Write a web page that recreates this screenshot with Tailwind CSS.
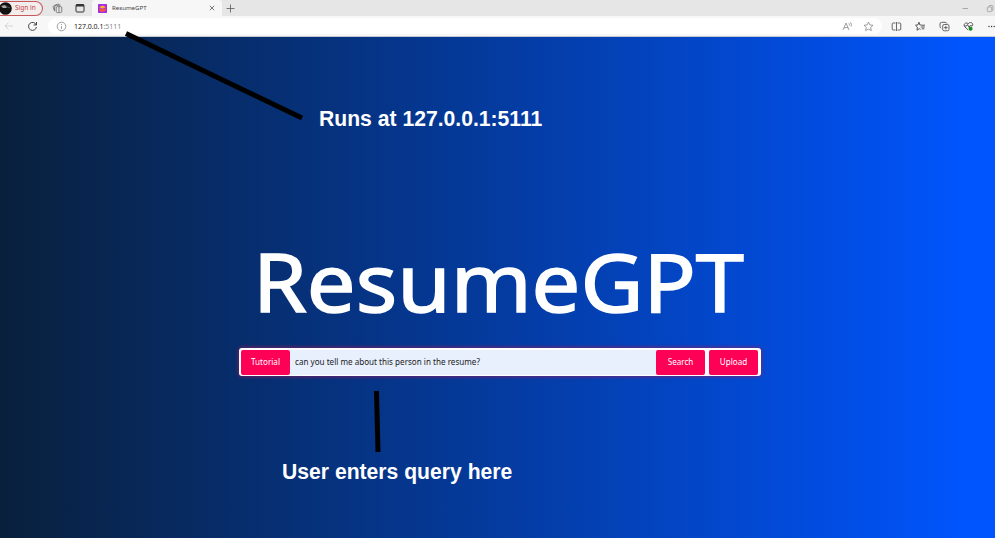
<!DOCTYPE html>
<html lang="en">
<head>
<meta charset="utf-8">
<title>ResumeGPT</title>
<script src="https://cdn.jsdelivr.net/npm/@tailwindcss/browser@4"></script>
</head>
<body class="relative flex h-[538px] w-[995px] flex-col overflow-hidden font-['Noto_Sans',sans-serif]">
<header class="h-[37px] shrink-0 border-b border-[#c3c7cf] bg-[#f7f7f7]">
  <div class="flex h-4 items-center bg-[#e6e6e6]">
    <div class="flex h-[15px] w-[43px] items-center gap-[3px] rounded-r-full border border-l-0 border-[#c9585c] bg-[#f3eeee]">
      <svg class="h-[13px] w-3 shrink-0" viewBox="0 0 12 13"><circle cx="5.5" cy="6.5" r="6.3" fill="#111"/><path d="M1 4L5 3 7 6 3 6Z" fill="#a9aaa2"/><path d="M6 4l4 2" stroke="#555" /></svg>
      <span class="whitespace-nowrap text-[6.5px] leading-none text-[#c33c42]">Sign in</span>
    </div>
    <svg class="ml-[9px] h-[11px] w-[11px]" viewBox="0 0 11 11" fill="none" stroke="#666" stroke-width=".8"><rect x="4.200" y="3.600" width="5.600" height="6" rx="1.300"/><path d="M2.600 8.200L1.200 4.400Q1 3 2.200 2.500L5.500 1.200Q7 .7 7.600 2M2.600 7.500V4Q2.700 2.500 4.200 2.300H8.500M7 4v5"/></svg>
    <svg class="ml-3 h-[10px] w-[10px]" viewBox="0 0 10 10" fill="none" stroke="#333"><rect x="1" y="1.500" width="8" height="7.500" rx="1"/><path d="M1 2.500h8" stroke-width="2"/></svg>
    <div class="ml-[7px] flex h-4 w-[130px] items-center rounded-t-[3px] bg-[#f7f7f7] pl-[6px] pr-[7px]">
      <svg class="h-[9px] w-[9px]" viewBox="0 0 9 9"><rect width="9" height="9" rx=".8" fill="#a32be8"/><path d="M1 3L4.500 1.500 8 3 4.500 4.800Z" fill="#ffb022"/><path d="M1.500 4l3 1.500L7.500 4v3L4.500 8 1.500 7Z" fill="#f9563c"/></svg>
      <span class="ml-[5px] flex-1 text-[6.1px] leading-none text-[#444]">ResumeGPT</span>
      <svg class="h-[6px] w-[6px]" viewBox="0 0 6 6" stroke="#555" stroke-width=".8"><path d="M.8.8l4.400 4.400M5.200.8L.8 5.200"/></svg>
    </div>
    <svg class="ml-1 h-[9px] w-[9px]" viewBox="0 0 9 9" stroke="#666" stroke-width=".9"><path d="M4.500.5v8M.5 4.500h8"/></svg>
    <svg class="ml-auto h-[9px] w-[34px]" viewBox="0 0 34 9" fill="none" stroke="#999" stroke-width=".8"><path d="M1.500 4.500h5.500M27.500 2.500Q27.800 1.500 29 1.500h2Q32 1.500 32 3v2.500Q32 6.500 31 6.700"/><rect x="26.300" y="3" width="4.400" height="4.600" rx="1"/></svg>
  </div>
  <div class="flex h-5 items-center">
    <svg class="ml-1 h-[10px] w-[10px]" viewBox="0 0 10 10" fill="none" stroke="#ccc" stroke-width=".8"><path d="M9 5H1M4.500 1.500L1 5l3.500 3.500"/></svg>
    <svg class="ml-[13px] h-[11px] w-[11px]" viewBox="0 0 11 11" fill="none" stroke="#444"><path d="M9.300 4A4 4 0 1 0 9.500 6M9.500 1v3H6.600"/></svg>
    <div class="ml-[10px] flex h-4 w-[836px] items-center rounded-full bg-white pl-2 pr-[8px]">
      <svg class="h-[11px] w-[11px]" viewBox="0 0 11 11" fill="none" stroke="#888" stroke-width=".8"><circle cx="5.500" cy="5.500" r="4.300"/><path d="M5.500 5v3M5.500 3v1"/></svg>
      <span class="ml-[7px] text-[7px] leading-none tracking-[-0.02px] text-[#222]">127.0.0.1<span class="text-[#888]">:5111</span></span>
      <svg class="ml-auto h-[11px] w-[11px]" viewBox="0 0 11 11" fill="none" stroke="#888" stroke-width=".8"><path d="M1 9L4 2l3 7M2 6.600h4M6.800 2.200q1 1 .5 2.400M8.400 1.300q1.700 1.600.7 4.200"/></svg>
      <svg class="ml-[10px] h-[11px] w-[11px]" viewBox="0 0 11 11" fill="none" stroke="#888" stroke-width=".8" stroke-linejoin="round"><path d="M5.500 1l1.300 2.900 3.200.4-2.300 2.100.6 3.200-2.800-1.600-2.800 1.600.6-3.200L1 4.300l3.200-.4Z"/></svg>
    </div>
    <svg class="ml-[9px] h-[11px] w-[11px]" viewBox="0 0 11 11" fill="none" stroke="#555" stroke-width=".9"><path d="M4.500 2H2.200Q1.200 2 1.200 3v5Q1.200 9 2.200 9h2.300M6.500 2h2.300q1 0 1 1v5q0 1-1 1H6.500M5.500 1v9"/></svg>
    <svg class="ml-[13px] h-[11px] w-[11px]" viewBox="0 0 11 11" fill="none" stroke="#444" stroke-width=".9" stroke-linejoin="round"><path d="M6.500 4L4.800 3.900 4 1.200 2.900 3.900.5 4.200l1.900 1.900L2 9.200l2.400-1.500 1.200.7M6.500 4.200H10M5.800 6h4M6.800 7.800h2.500"/></svg>
    <svg class="ml-[13px] h-[11px] w-[11px]" viewBox="0 0 11 11" fill="none" stroke="#444" stroke-width=".8"><rect x="3.700" y="3.500" width="6.300" height="6.300" rx="1.500"/><path d="M2.200 7.200Q1 6.600 1 5.300V3q0-1.700 1.700-1.700H6q1.400 0 2 1.300M6.850 4.900v3.500M5.100 6.650h3.500"/></svg>
    <svg class="ml-[13px] h-[11px] w-[11px]" viewBox="0 0 11 11" fill="none" stroke="#444" stroke-width=".9"><path d="M5.200 9L1.700 5.700C0 3.700 2.500.5 5.200 2.700 8-.2 11 2.700 9.200 5.200M1.500 5h2l1-1.500L6 6.200 7 4.800h2.200"/><circle cx="7.600" cy="7.700" r="2" fill="#138a24" stroke="none"/></svg>
    <svg class="ml-[13px] h-[11px] w-[8px]" viewBox="0 0 8 11" fill="#333"><circle cx="2" cy="5.500" r=".7"/><circle cx="4.600" cy="5.500" r=".7"/><circle cx="7.200" cy="5.500" r=".7"/></svg>
  </div>
</header>
<main class="flex flex-1 flex-col items-center bg-linear-to-r/srgb from-[#09203c] from-0% to-[#0055ff] to-98% pt-[180px]">
  <h1 class="ml-[9px] flex h-[131px] items-start">
    <svg class="h-[131px] w-[510px]" viewBox="0 0 510 131"><text x="6" y="94.500" textLength="491" lengthAdjust="spacingAndGlyphs" fill="#fff" stroke="#fff" stroke-width="1.500" class="font-['Noto_Sans'] text-[81px]">ResumeGPT</text></svg>
  </h1>
  <form class="ml-[5px] flex h-[28px] w-[522px] items-center rounded-[3px] bg-white pl-[2px] pr-[3px] text-[8.1px] shadow-[0_0_4px_#a0185c]">
    <button type="button" class="h-[25px] w-[49px] rounded-[2px] bg-[#ff0057] text-white">Tutorial</button>
    <div class="flex h-[25px] flex-1 items-center bg-[#e8effd] pl-[5px] text-[#222]">can you tell me about this person in the resume?</div>
    <button type="button" class="h-[25px] w-[49px] rounded-[2px] bg-[#ff0057] text-white">Search</button>
    <button type="button" class="ml-1 h-[25px] w-[49px] rounded-[2px] bg-[#ff0057] text-white">Upload</button>
  </form>
</main>
<svg class="pointer-events-none absolute inset-0 h-[538px] w-[995px]" viewBox="0 0 995 538" stroke="#000" stroke-width="5"><path d="M126 33.500L302 118M376.500 391L378 452"/></svg>
<p class="absolute left-[319px] top-[107px] whitespace-nowrap font-['Liberation_Sans',sans-serif] text-[21.150px] font-bold leading-6 text-white">Runs at 127.0.0.1:5111</p>
<p class="absolute left-[282px] top-[460px] whitespace-nowrap font-['Liberation_Sans',sans-serif] text-[21.150px] font-bold leading-6 text-white">User enters query here</p>
</body>
</html>
